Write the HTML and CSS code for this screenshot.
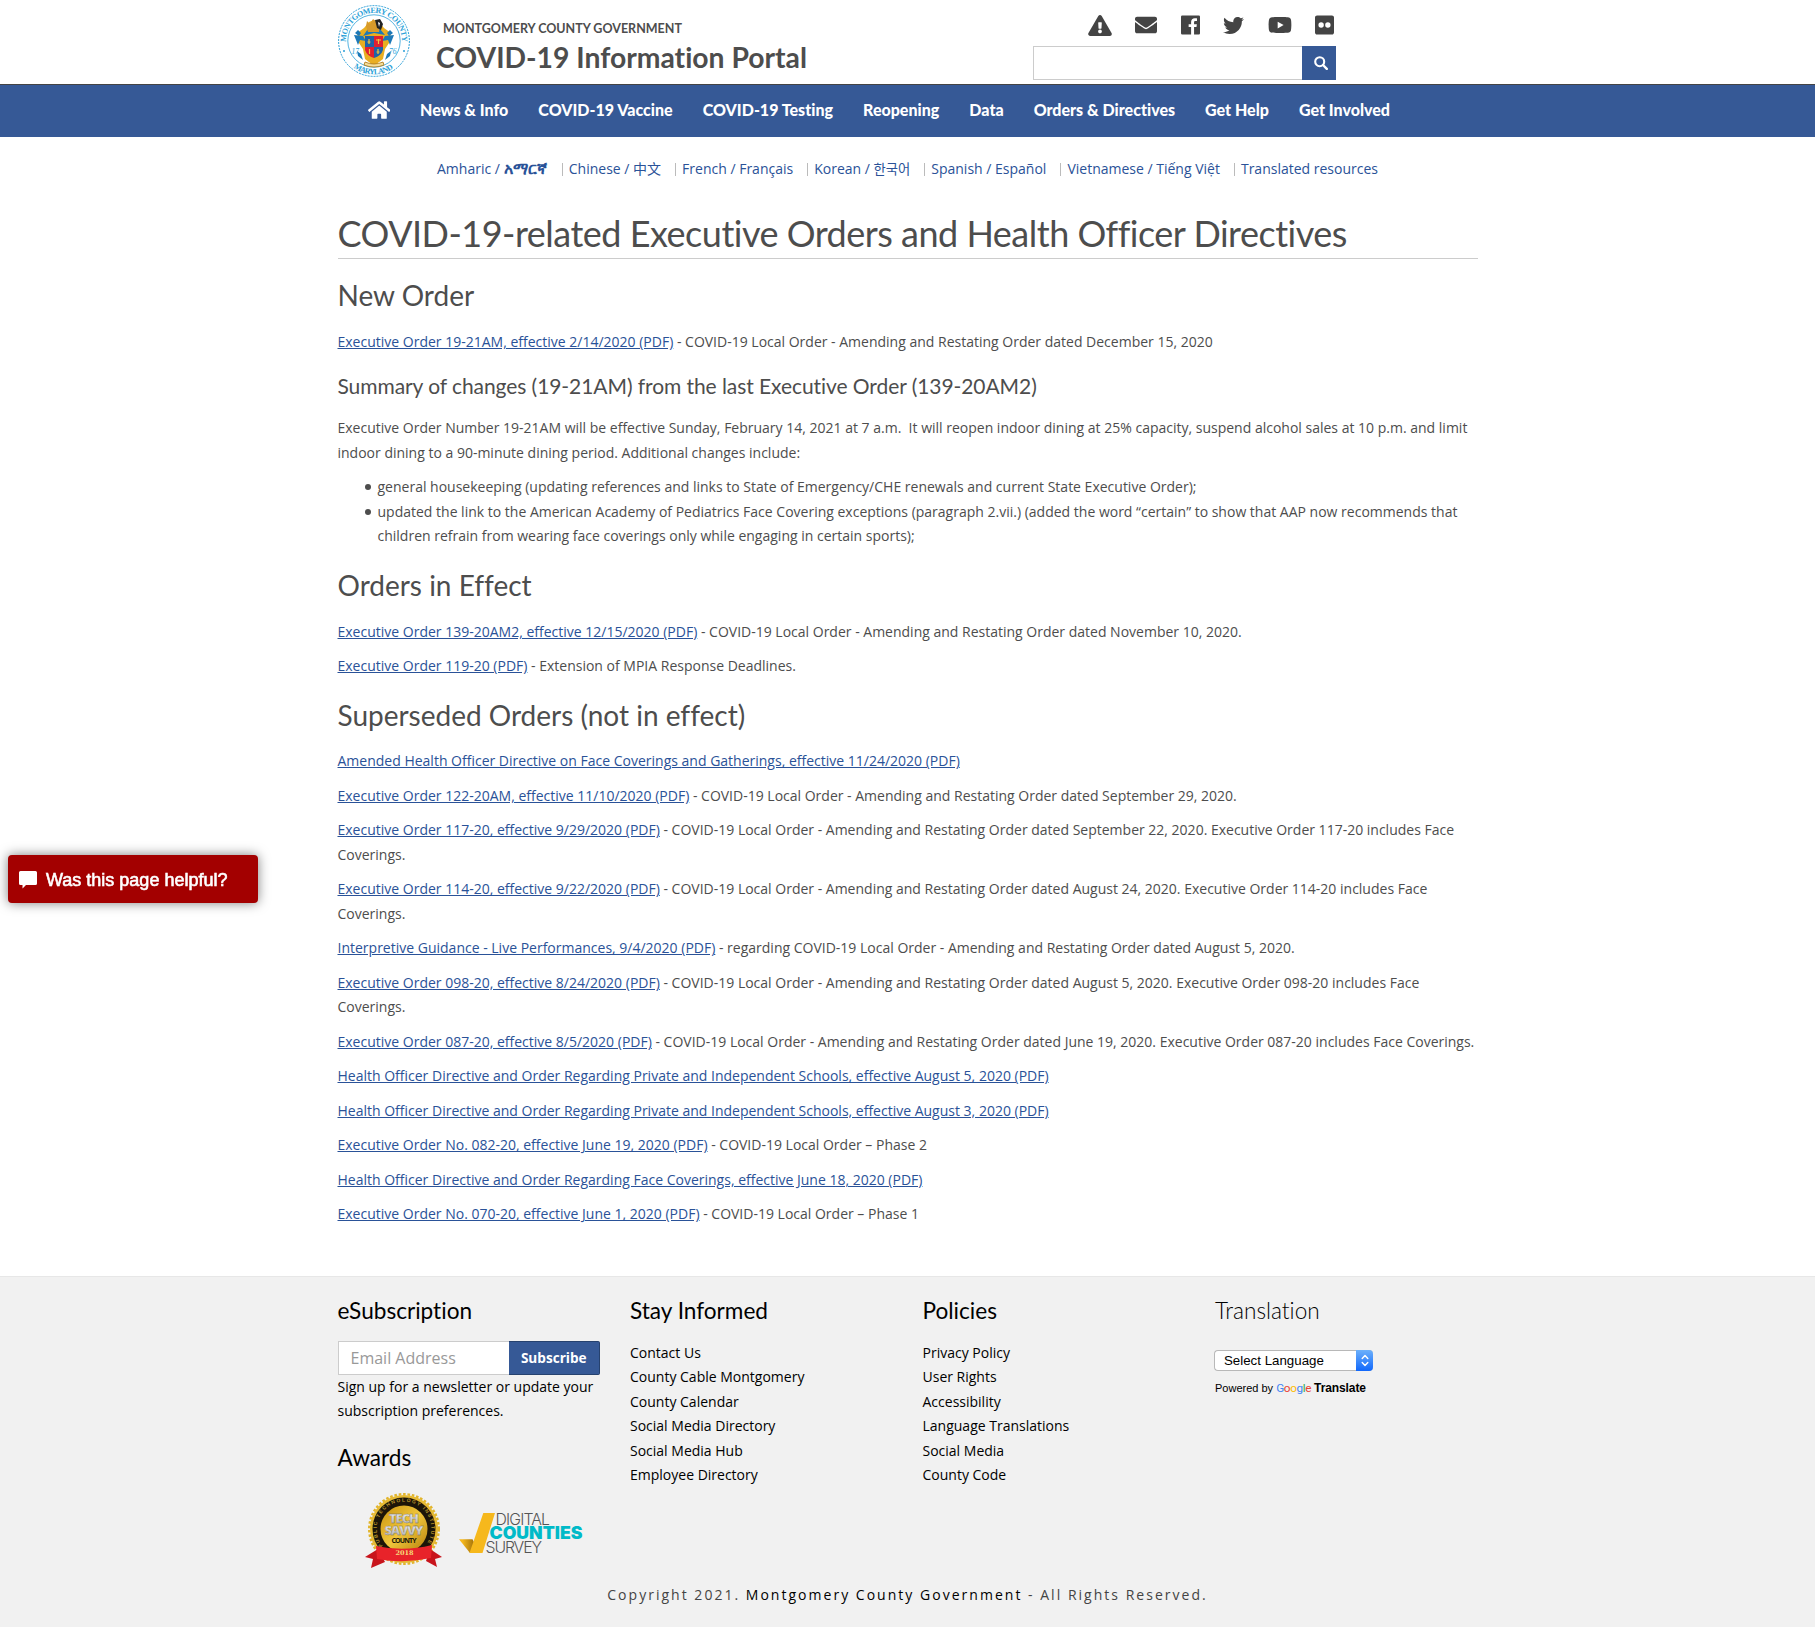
FILE: index.html
```html
<!DOCTYPE html>
<html lang="en">
<head>
<meta charset="utf-8">
<title>COVID-19 Information Portal</title>
<link rel="stylesheet" href="styles.css">
</head>
<body>
<header class="top">
  <div class="wrap top-row">
    <svg class="seal" viewBox="0 0 72 72">
      <defs>
        <path id="arcTop" d="M8.300 40A28 28 0 1 1 63.700 40"/>
        <path id="arcBottom" d="M15 62A33.600 33.600 0 0 0 57 62"/>
      </defs>
      <circle cx="36" cy="36" r="35.400" fill="#fff" stroke="#2a9fd8" stroke-width="1" stroke-dasharray="2 1"/>
      <circle cx="36" cy="36" r="26.200" fill="none" stroke="#2a9fd8" stroke-width=".8"/>
      <text class="seal-text"><textPath href="#arcTop" startOffset="3" textLength="90">MONTGOMERY COUNTY</textPath></text>
      <text class="seal-text"><textPath href="#arcBottom" startOffset="1" textLength="42">MARYLAND</textPath></text>
      <circle cx="6" cy="46" r="1" fill="#2a9fd8"/><circle cx="66" cy="46" r="1" fill="#2a9fd8"/>
      <path d="M26 23l-7 5 2 10 4 6 2 10 9 7 9-7 2-10 4-6 2-10-7-5-5-6-5-2-5 2z" fill="#e9ae22"/>
      <path d="M16 30l9 1 3 5-6-1-2 5zM56 30l-9 1-3 5 6-1 2 5zM30 24h12l5 6-11-2-11 3z" fill="#1d79b8"/>
      <path d="M17 28l3-3 3 3-2 3zM55 28l-3-3-3 3 2 3zM19 46l4 3 2 6-5-4zM53 46l-4 3-2 6 5-4z" fill="#1d79b8"/>
      <path d="M28 21l1-5 3 3 3-5 4 3 3 4-1 6H30z" fill="#d79a2b"/>
      <path d="M37 15l5-1 3 5-2 6-4-2z" fill="#222"/><path d="M40 17l2 1-1 4z" fill="#fff"/>
      <path d="M27 31h9v11h-9z" fill="#1f63a8"/><path d="M36 31h9v11h-9z" fill="#e02030"/>
      <path d="M27 42h9v11q-7-2-9-8z" fill="#e02030"/><path d="M36 42h9v3q-2 6-9 8z" fill="#1f63a8"/>
      <path d="M31 34v5M29.500 37h3M40.500 34v5M38 35h5M31.500 44v5M40 44v5M38.500 47h3" stroke="#f1c33c" stroke-width="1.200"/>
      <path d="M27 57q9 4 18 0l1 3q-10 4-20 0z" fill="#f4dd9a" stroke="#a87412" stroke-width=".8"/>
      <text class="seal-year" x="13.500" y="49">17</text><text class="seal-year" x="51" y="49">76</text>
    </svg>
    <div class="brand">
      <div class="brand-sub">MONTGOMERY COUNTY GOVERNMENT</div>
      <div class="brand-title">COVID-19 Information Portal</div>
    </div>
    <div class="tools">
      <div class="social">
        <svg width="24" height="21" viewBox="0 0 576 512"><path d="M569.517 440.013C587.975 472.007 564.806 512 527.940 512H48.054c-36.937 0-59.999-40.055-41.577-71.987L246.423 23.985c18.467-32.009 64.720-31.951 83.154 0l239.940 416.028zM288 354c-25.405 0-46 20.595-46 46s20.595 46 46 46 46-20.595 46-46-20.595-46-46-46zm-43.673-165.346l7.418 136c.347 6.364 5.609 11.346 11.982 11.346h48.546c6.373 0 11.635-4.982 11.982-11.346l7.418-136c.375-6.874-5.098-12.654-11.982-12.654h-63.383c-6.884 0-12.356 5.780-11.981 12.654z"/></svg>
        <svg width="22" height="22" viewBox="0 0 512 512"><path d="M502.300 190.800c3.900-3.100 9.700-.2 9.700 4.700V400c0 26.500-21.500 48-48 48H48c-26.500 0-48-21.500-48-48V195.600c0-5 5.700-7.800 9.700-4.700 22.400 17.400 52.100 39.500 154.100 113.600 21.100 15.400 56.700 47.800 92.200 47.600 35.700.3 72-32.800 92.300-47.600 102-74.100 131.600-96.300 154-113.700zM256 320c23.200.4 56.600-29.200 73.400-41.400 132.700-96.300 142.800-104.700 173.400-128.700 5.800-4.500 9.200-11.500 9.200-18.900v-19c0-26.500-21.500-48-48-48H48c-26.500 0-48 21.500-48 48v19c0 7.400 3.400 14.300 9.200 18.900 30.600 23.900 40.700 32.400 173.400 128.700 16.800 12.200 50.200 41.800 73.400 41.400z"/></svg>
        <svg width="19" height="22" viewBox="0 0 448 512"><path d="M420 32H28A28 28 0 0 0 0 60v392a28 28 0 0 0 28 28h210V306h-58v-68h58v-51c0-57 35-89 87-89 25 0 46 2 52 3v60h-36c-28 0-33 13-33 33v44h66l-9 68h-57v174h112a28 28 0 0 0 28-28V60a28 28 0 0 0-28-28z"/></svg>
        <svg width="21" height="21" viewBox="0 0 512 512"><path d="M459.370 151.716c.325 4.548.325 9.097.325 13.645 0 138.720-105.583 298.558-298.558 298.558-59.452 0-114.680-17.219-161.137-47.106 8.447.974 16.568 1.299 25.340 1.299 49.055 0 94.213-16.568 130.274-44.832-46.132-.975-84.792-31.188-98.112-72.772 6.498.974 12.995 1.624 19.818 1.624 9.421 0 18.843-1.300 27.614-3.573-48.081-9.747-84.143-51.980-84.143-102.985v-1.299c13.969 7.797 30.214 12.670 47.431 13.319-28.264-18.843-46.781-51.005-46.781-87.391 0-19.492 5.197-37.360 14.294-52.954 51.655 63.675 129.300 105.258 216.365 109.807-1.624-7.797-2.599-15.918-2.599-24.040 0-57.828 46.782-104.934 104.934-104.934 30.213 0 57.502 12.670 76.670 33.137 23.715-4.548 46.456-13.320 66.599-25.340-7.798 24.366-24.366 44.833-46.132 57.827 21.117-2.273 41.584-8.122 60.426-16.243-14.292 20.791-32.161 39.308-52.628 54.253z"/></svg>
        <svg width="24" height="22" viewBox="0 0 576 512"><path fill-rule="evenodd" d="M549.655 124.083c-6.281-23.650-24.787-42.276-48.284-48.597C458.781 64 288 64 288 64S117.220 64 74.629 75.486c-23.497 6.322-42.003 24.947-48.284 48.597-11.412 42.867-11.412 132.305-11.412 132.305s0 89.438 11.412 132.305c6.281 23.650 24.787 41.500 48.284 47.821C117.220 448 288 448 288 448s170.780 0 213.371-11.486c23.497-6.321 42.003-24.171 48.284-47.821 11.412-42.867 11.412-132.305 11.412-132.305s0-89.438-11.412-132.305zM232.145 337.591V175.185l142.739 81.205z"/></svg>
        <svg width="19" height="22" viewBox="0 0 448 512"><path fill-rule="evenodd" d="M400 32H48C21.500 32 0 53.500 0 80v352c0 26.500 21.500 48 48 48h352c26.500 0 48-21.500 48-48V80c0-26.500-21.500-48-48-48zM144.500 319a63.500 63.500 0 1 1 0-127 63.500 63.500 0 0 1 0 127zm159 0a63.500 63.500 0 1 1 0-127 63.500 63.500 0 0 1 0 127z"/></svg>
      </div>
      <form class="search">
        <input class="search-input" type="text" aria-label="Search">
        <button class="search-btn" type="button" aria-label="Search"><svg width="14" height="14" viewBox="0 0 14 14"><circle cx="5.700" cy="5.700" r="4.500" fill="none" stroke="#fff" stroke-width="2.100"/><path d="M9 9l3.800 3.800" stroke="#fff" stroke-width="2.400" stroke-linecap="round"/></svg></button>
      </form>
    </div>
  </div>
</header>
<nav class="nav">
  <div class="wrap nav-row">
    <a class="nav-home" aria-label="Home"><svg width="22.500" height="20" viewBox="0 0 576 512"><path d="M280.370 148.260L96 300.110V464a16 16 0 0 0 16 16l112.060-.29a16 16 0 0 0 15.920-16V368a16 16 0 0 1 16-16h64a16 16 0 0 1 16 16v95.640a16 16 0 0 0 16 16.050L464 480a16 16 0 0 0 16-16V300L295.670 148.260a12.190 12.190 0 0 0-15.300 0zM571.600 251.470L488 182.560V44.050a12 12 0 0 0-12-12h-56a12 12 0 0 0-12 12v72.610L318.470 43a48 48 0 0 0-61 0L4.340 251.470a12 12 0 0 0-1.600 16.900l25.500 31A12 12 0 0 0 45.150 301l235.220-193.740a12.190 12.190 0 0 1 15.300 0L530.900 301a12 12 0 0 0 16.900-1.600l25.500-31a12 12 0 0 0-1.700-16.930z" fill="#fff"/></svg></a>
    <a>News &amp; Info</a><a>COVID-19 Vaccine</a><a>COVID-19 Testing</a><a>Reopening</a><a>Data</a><a>Orders &amp; Directives</a><a>Get Help</a><a>Get Involved</a>
  </div>
</nav>
<ul class="langs">
  <li>Amharic / <span class="amharic">አማርኛ</span></li><li>Chinese / 中文</li><li>French / Français</li><li>Korean / <span class="korean">한국어</span></li><li>Spanish / Español</li><li>Vietnamese / Tiếng Việt</li><li>Translated resources</li>
</ul>
<main class="wrap content">
  <h1>COVID-19-related Executive Orders and Health Officer Directives</h1>
  <h2 class="first">New Order</h2>
  <p><a>Executive Order 19-21AM, effective 2/14/2020 (PDF)</a> - COVID-19 Local Order - Amending and Restating Order dated December 15, 2020</p>
  <h3>Summary of changes (19-21AM) from the last Executive Order (139-20AM2)</h3>
  <p>Executive Order Number 19-21AM will be effective Sunday, February 14, 2021 at 7 a.m.&nbsp; It will reopen indoor dining at 25% capacity, suspend alcohol sales at 10 p.m. and limit<br>indoor dining to a 90-minute dining period. Additional changes include:</p>
  <ul class="changes">
    <li>general housekeeping (updating references and links to State of Emergency/CHE renewals and current State Executive Order);</li>
    <li>updated the link to the American Academy of Pediatrics Face Covering exceptions (paragraph 2.vii.) (added the word “certain” to show that AAP now recommends that<br>children refrain from wearing face coverings only while engaging in certain sports);</li>
  </ul>
  <h2>Orders in Effect</h2>
  <p><a>Executive Order 139-20AM2, effective 12/15/2020 (PDF)</a> - COVID-19 Local Order - Amending and Restating Order dated November 10, 2020.</p>
  <p><a>Executive Order 119-20 (PDF)</a> - Extension of MPIA Response Deadlines.</p>
  <h2>Superseded Orders (not in effect)</h2>
  <p><a>Amended Health Officer Directive on Face Coverings and Gatherings, effective 11/24/2020 (PDF)</a></p>
  <p><a>Executive Order 122-20AM, effective 11/10/2020 (PDF)</a> - COVID-19 Local Order - Amending and Restating Order dated September 29, 2020.</p>
  <p><a>Executive Order 117-20, effective 9/29/2020 (PDF)</a> - COVID-19 Local Order - Amending and Restating Order dated September 22, 2020. Executive Order 117-20 includes Face<br>Coverings.</p>
  <p><a>Executive Order 114-20, effective 9/22/2020 (PDF)</a> - COVID-19 Local Order - Amending and Restating Order dated August 24, 2020. Executive Order 114-20 includes Face<br>Coverings.</p>
  <p><a>Interpretive Guidance - Live Performances, 9/4/2020 (PDF)</a> - regarding COVID-19 Local Order - Amending and Restating Order dated August 5, 2020.</p>
  <p><a>Executive Order 098-20, effective 8/24/2020 (PDF)</a> - COVID-19 Local Order - Amending and Restating Order dated August 5, 2020. Executive Order 098-20 includes Face<br>Coverings.</p>
  <p><a>Executive Order 087-20, effective 8/5/2020 (PDF)</a> - COVID-19 Local Order - Amending and Restating Order dated June 19, 2020. Executive Order 087-20 includes Face Coverings.</p>
  <p><a>Health Officer Directive and Order Regarding Private and Independent Schools, effective August 5, 2020 (PDF)</a></p>
  <p><a>Health Officer Directive and Order Regarding Private and Independent Schools, effective August 3, 2020 (PDF)</a></p>
  <p><a>Executive Order No. 082-20, effective June 19, 2020 (PDF)</a> - COVID-19 Local Order – Phase 2</p>
  <p><a>Health Officer Directive and Order Regarding Face Coverings, effective June 18, 2020 (PDF)</a></p>
  <p><a>Executive Order No. 070-20, effective June 1, 2020 (PDF)</a> - COVID-19 Local Order – Phase 1</p>
</main>
<footer class="footer">
  <div class="wrap footer-cols">
    <section>
      <h4>eSubscription</h4>
      <form class="subscribe"><input class="email" type="text" placeholder="Email Address"><button class="sub-btn" type="button">Subscribe</button></form>
      <div class="signup">Sign up for a newsletter or update your subscription preferences.</div>
      <h4 class="awards-title">Awards</h4>
      <div class="awards">
        <svg width="80" height="78" viewBox="0 0 80 78">
          <defs>
            <linearGradient id="gold" x1="0" y1="0" x2="1" y2="1"><stop offset="0" stop-color="#c8930f"/><stop offset=".5" stop-color="#f0c63c"/><stop offset="1" stop-color="#b57f0a"/></linearGradient>
            <linearGradient id="silver" x1="0" y1="0" x2="0" y2="1"><stop offset="0" stop-color="#fff"/><stop offset="1" stop-color="#a9a9a9"/></linearGradient>
            <path id="ringArc" d="M18.700 54A27.300 27.300 0 1 1 61.300 54"/>
          </defs>
          <circle cx="40" cy="37" r="34" fill="#e6ba34"/>
          <circle cx="40" cy="37" r="34.800" fill="none" stroke="#e2b52c" stroke-width="2.400" stroke-dasharray="2.600 1.800"/>
          <circle cx="40" cy="37" r="31.500" fill="#1c1508"/>
          <circle cx="40" cy="37" r="23.500" fill="url(#gold)"/>
          <text class="ring-text"><textPath href="#ringArc" textLength="118">PUBLIC TECHNOLOGY INSTITUTE</textPath></text>
          <text class="badge-tech" x="40" y="31" textLength="30">TECH</text>
          <text class="badge-tech" x="40" y="42.500" textLength="39">SAVVY</text>
          <text class="badge-county" x="40" y="50.500" textLength="25">COUNTY</text>
          <path d="M14 57L1 65l8 2-2 9 14-6zM66 57l12 8-7 2 2 8-11-6z" fill="#c8141c"/>
          <path d="M12 54q28 6 56-1l-1 13q-27 6-54 1z" fill="#e8232a"/>
          <text class="badge-year" x="40.500" y="63">2018</text>
        </svg>
        <svg class="survey" width="126" height="44" viewBox="0 0 126 44">
          <defs><linearGradient id="fold" x1="0" y1="0" x2="1" y2="0"><stop offset=".2" stop-color="#f6b81c"/><stop offset="1" stop-color="#9a6a08"/></linearGradient></defs>
          <path d="M0 27.300h13.500l3 6-4 7.700h-1.500z" fill="url(#fold)"/>
          <path d="M24.300 1H36L23.500 41H10.500z" fill="#f6b81c"/>
          <text class="survey-thin" x="36.500" y="12.500" textLength="54.500">DIGITAL</text>
          <text class="survey-bold" x="30.500" y="27.300" textLength="93" lengthAdjust="spacingAndGlyphs">COUNTIES</text>
          <text class="survey-thin" x="26.500" y="41" textLength="56.500">SURVEY</text>
        </svg>
      </div>
    </section>
    <section>
      <h4>Stay Informed</h4>
      <ul class="links"><li>Contact Us</li><li>County Cable Montgomery</li><li>County Calendar</li><li>Social Media Directory</li><li>Social Media Hub</li><li>Employee Directory</li></ul>
    </section>
    <section>
      <h4>Policies</h4>
      <ul class="links"><li>Privacy Policy</li><li>User Rights</li><li>Accessibility</li><li>Language Translations</li><li>Social Media</li><li>County Code</li></ul>
    </section>
    <section>
      <h4 class="thin">Translation</h4>
      <div class="select"><span>Select Language</span><i class="stepper"><svg width="8" height="13" viewBox="0 0 8 13"><path d="M1.200 4.500L4 1.500l2.800 3M1.200 8.500L4 11.500l2.800-3" fill="none" stroke="#fff" stroke-width="1.400" stroke-linecap="round" stroke-linejoin="round"/></svg></i></div>
      <div class="powered">Powered by <span class="google"><i class="g-blue">G</i><i class="g-red">o</i><i class="g-yellow">o</i><i class="g-blue">g</i><i class="g-green">l</i><i class="g-red">e</i></span> <b>Translate</b></div>
    </section>
  </div>
  <div class="copyright">Copyright 2021. <span>Montgomery County Government</span> - All Rights Reserved.</div>
</footer>
<div class="feedback"><svg width="18" height="18" viewBox="0 0 18 18"><path d="M1.500 0h15Q18 0 18 1.500v11Q18 14 16.500 14H7L3.500 17.500V14h-2Q0 14 0 12.500v-11Q0 0 1.500 0z" fill="#fff"/></svg><span>Was this page helpful?</span></div>
</body>
</html>
```
FILE: styles.css
```css
* { box-sizing: border-box; }
body {
  margin: 0;
  font: 14px/24.500px "Open Sans", "Noto Sans CJK SC", "Noto Sans CJK KR", sans-serif;
  color: #4d4d4d;
  background: #fff;
}
.wrap { width: 1140px; margin: 0 auto; }
ul { list-style: none; margin: 0; padding: 0; }

.top { height: 85px; border-bottom: 1px solid #444; }
.top-row { display: flex; }
.seal { width: 72px; height: 72px; margin-top: 5px; overflow: visible; }
.seal-text { font: bold 8px "Liberation Serif", serif; fill: #2a9fd8; }
.seal-year { font: italic 7.500px "Liberation Serif", serif; fill: #2a9fd8; }
.brand { margin-left: 26.500px; width: 597px; font-family: Lato, sans-serif; font-weight: bold; font-variant-ligatures: none; color: #4d4d4d; }
.brand-sub { margin: 21px 0 0 7px; font-size: 12.500px; line-height: 16px; }
.brand-title { margin-top: 3px; font-size: 28.300px; line-height: 34px; white-space: nowrap; }
.tools { width: 303px; }
.social { display: flex; align-items: center; justify-content: space-between; height: 32px; margin: 9px 2px 0 55px; }
.social svg { fill: #444; display: block; }
.search { display: flex; margin-top: 5px; }
.search-input { width: 269px; height: 34px; border: 1px solid #ccc; border-right: 0; padding: 0 12px; }
.search-btn { width: 34px; height: 34px; border: 0; padding: 0 0 0 4px; background: #365996; display: flex; align-items: center; justify-content: center; }

.nav { height: 52px; background: #365996; }
.nav-row { display: flex; height: 52px; padding: 0 30px 1.500px; gap: 30px; align-items: center; white-space: nowrap; }
.nav a { font: 900 16px/24px Lato, sans-serif; letter-spacing: .010px; font-variant-ligatures: none; color: #fff; }
.nav-home svg { display: block; }

.langs { display: flex; justify-content: center; padding: 20px 0 0; height: 61px; color: #2a5298; }
.langs li { white-space: nowrap; height: 24px; }
.langs li + li { margin-left: 14px; padding-left: 7px; background: linear-gradient(#bbb, #bbb) 0 6px / 1px 13px no-repeat; }
.amharic { font-size: 16px; font-weight: 600; line-height: 1; letter-spacing: .3px; }
.korean { font-size: 13.300px; line-height: 1; }

.content h1, .content h2, .content h3 { font-family: Lato, sans-serif; font-weight: 400; margin: 0; white-space: nowrap; font-variant-ligatures: none; }
.content h1 { height: 61px; padding-top: 13px; font-size: 36px; line-height: 44px; letter-spacing: -.500px; border-bottom: 1px solid #ccc; }
.content h2 { font-size: 28px; line-height: 49px; margin: 12.400px 0 9.400px; }
.content h2.first { margin: 12px 0 10px; }
.content h3 { font-size: 21px; line-height: 38.500px; letter-spacing: -.070px; margin: 12px 0 11px; }
.content p { margin: 0 0 10px; white-space: nowrap; }
.content a { color: #2a5298; text-decoration: underline; }
.changes { padding: .400px 0 0 40px; white-space: nowrap; }
.changes li { position: relative; }
.changes li::before { content: ""; position: absolute; left: -13px; top: 9px; width: 6px; height: 6px; border-radius: 50%; background: #4d4d4d; }

.footer { margin-top: 49px; height: 352px; background: #f1f1f1; border-top: 1px solid #e7e7e7; color: #000; }
.footer-cols { display: grid; grid-template-columns: repeat(4, 262.500px); column-gap: 30px; height: 306px; padding-top: 14px; }
.footer h4 { margin: 0; font: 400 22.600px/40px Lato, sans-serif; font-variant-ligatures: none; }
.footer h4.thin { font-weight: 300; }
.subscribe { display: flex; margin-top: 10px; }
.email { width: 171px; height: 34px; border: 1px solid #ccc; border-right: 0; padding: 1px 12px 0; font: 16px "Open Sans", sans-serif; background: #fff; }
.email::placeholder { color: #999; }
.sub-btn { width: 92px; height: 34px; padding: 0 0 1px; background: #365996; border: 1px solid #26426f; border-left: 0; border-radius: 0 2px 2px 0; color: #fff; font: bold 13.600px "Open Sans", sans-serif; }
.signup { width: 262.500px; }
.footer .awards-title { margin-top: 14px; }
.awards { display: flex; margin: 14.500px 0 0 26px; }
.awards svg { overflow: visible; }
.survey { margin: 20px 0 0 15px; }
.ring-text { font: bold 5px "Liberation Sans", sans-serif; fill: #b8942b; }
.badge-tech { font: 800 13px "Open Sans", sans-serif; fill: url(#silver); stroke: #6d675a; stroke-width: .3; text-anchor: middle; }
.badge-county { font: bold 7px "Open Sans", sans-serif; fill: #221a08; text-anchor: middle; }
.badge-year { font: bold 6.500px "DejaVu Serif", serif; fill: #f5dc7a; text-anchor: middle; }
.survey-thin { font: 300 15.800px Inter, sans-serif; fill: #555; }
.survey-bold { font: 900 17px Inter, sans-serif; fill: #00bac8; }
.links { margin-top: 10px; }
.select { display: flex; justify-content: space-between; width: 159px; height: 21px; margin: 19px 0 0 -1px; padding-left: 9px; background: #fff; border: 1px solid #b8b8b8; border-right: 0; border-radius: 4px; font: 13.300px/19px "Liberation Sans", sans-serif; }
.stepper { width: 17px; height: 21px; margin-top: -1px; border-radius: 0 4px 4px 0; background: linear-gradient(#6cb0fb, #1168fb); display: flex; align-items: center; justify-content: center; }
.powered { margin-top: 6px; font: 11px/22px "Liberation Sans", sans-serif; white-space: nowrap; }
.powered b { font-size: 12px; line-height: 20px; letter-spacing: -.1px; }
.google { font: 11.800px/20px Roboto, sans-serif; letter-spacing: -.4px; }
.google i { font-style: normal; }
.g-blue { color: #4285f4; } .g-red { color: #ea4335; } .g-yellow { color: #fbbc05; } .g-green { color: #34a853; }
.copyright { text-align: center; letter-spacing: 2.020px; color: #444; white-space: nowrap; }
.copyright span { color: #000; }

.feedback { position: fixed; left: 8px; top: 855px; width: 250px; height: 48px; display: flex; align-items: center; padding: 2px 11px 0; background: #a30000; border-radius: 4px; box-shadow: 0 0 12px rgba(0,0,0,.5); color: #fff; font: 18px "Liberation Sans", sans-serif; -webkit-text-stroke: .6px #fff; }
.feedback svg { margin: 0 9px 0 0; }
```
